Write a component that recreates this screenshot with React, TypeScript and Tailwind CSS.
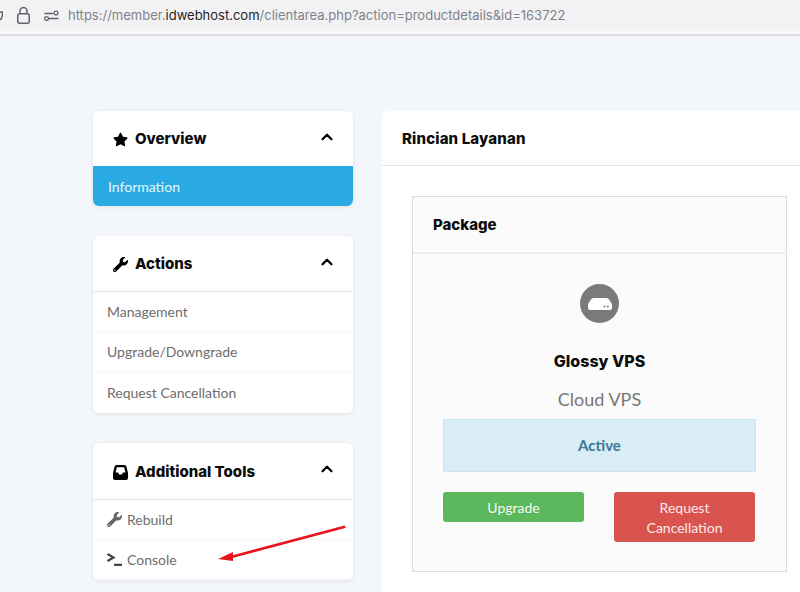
import { ChevronUp } from 'lucide-react';
import { FaStar, FaWrench } from 'react-icons/fa';
import type { ReactNode } from 'react';

const headingFont = "font-['Inter','Liberation_Sans',sans-serif]";

function SidePanel({ icon, title, tall, children }: { icon: ReactNode; title: string; tall?: boolean; children: ReactNode }) {
  return (
    <div className="bg-white rounded-md shadow-[0_1px_4px_rgba(0,0,0,0.08)] overflow-hidden">
      <div className={`${tall ? 'h-[56px]' : 'h-[55px]'} pl-[19px] pr-[17px] flex items-center justify-between`}>
        <div className="flex items-center gap-[7px] pt-[2px]">
          <span className="w-[16px] flex justify-center text-black">{icon}</span>
          <span className={`${headingFont} text-[15px] font-extrabold text-[#0c0c0c] whitespace-nowrap`}>{title}</span>
        </div>
        <ChevronUp size={18} strokeWidth={3} className="text-black -translate-y-[2px]" />
      </div>
      {children}
    </div>
  );
}

function SideItem({ label, icon, tall }: { label: string; icon?: ReactNode; tall?: boolean }) {
  return (
    <div
      className={`${
        tall ? 'h-[41px]' : 'h-[40px] border-b border-[#f5f5f5]'
      } pl-[14px] flex items-center gap-[5px] text-[14px] text-[#6d6d6d]`}
    >
      {icon}
      <span>{label}</span>
    </div>
  );
}

export default function App() {
  return (
    <div className="w-[800px] h-[592px] overflow-hidden bg-[#f3f6fa] relative font-['Lato','Liberation_Sans',sans-serif]">
      {/* Browser bar */}
      <div className="h-[36px] bg-[#f8f8f9] border-b-2 border-[#dddddd]">
        <div className="h-[31px] bg-[#f2f2f4] flex items-center">
          <svg width="3" height="10" viewBox="0 0 3 10" fill="none" stroke="#5f6368" strokeWidth="1.4" className="mr-[14px]">
            <path d="M0 1H2.4V4Q2.2 7 0 9" />
          </svg>
          <svg width="13" height="17" viewBox="0 0 13 17" fill="none" stroke="#5f6368" strokeWidth="1.5" className="mr-[14px]">
            <rect x="0.75" y="6.75" width="11.5" height="9.5" rx="2" />
            <path d="M3 6.75V4a3.5 3.5 0 0 1 7 0V6.75" />
          </svg>
          <svg width="15" height="12" viewBox="0 0 15 12" fill="none" stroke="#5f6368" strokeWidth="1.3" className="mr-[9px]">
            <path d="M0.5 3.5H9M4.5 8.5H14.5" />
            <circle cx="12" cy="3" r="1.9" />
            <circle cx="2.5" cy="8.5" r="1.9" />
          </svg>
          <span className="font-['Inter','Liberation_Sans',sans-serif] text-[13px] text-[#808388] whitespace-nowrap">
            https://member.<span className="text-[#1f1f1f]">idwebhost.com</span>/clientarea.php?action=productdetails&amp;id=163722
          </span>
        </div>
      </div>

      {/* Page content */}
      <div className="flex gap-[29px] pl-[93px] pt-[75px]">
        <div className="w-[260px] shrink-0 flex flex-col gap-[30px]">
          <SidePanel icon={<FaStar size={15} />} title="Overview">
            <div className="h-[40px] bg-[#2babe3] pl-[15px] flex items-center text-[14px] text-[#e6f6fd]">Information</div>
          </SidePanel>

          <SidePanel icon={<FaWrench size={15} />} title="Actions">
            <div className="border-t border-[#dfe1e5]">
              <SideItem label="Management" />
              <SideItem label="Upgrade/Downgrade" />
              <SideItem label="Request Cancellation" tall />
            </div>
          </SidePanel>

          <SidePanel
            tall
            title="Additional Tools"
            icon={
              <svg width="15" height="15" viewBox="0 0 15 15">
                <path
                  fill="#000"
                  fillRule="evenodd"
                  d="M3.5 0H11.5Q13 0 13.4 1.5L15 8V13Q15 15 13 15H2Q0 15 0 13V8L1.6 1.5Q2 0 3.5 0ZM3.8 2.2L2.6 7.6H5.2L6 9.4H9L9.8 7.6H12.4L11.2 2.2Z"
                />
              </svg>
            }
          >
            <div className="border-t border-[#dfe1e5]">
              <SideItem label="Rebuild" icon={<FaWrench size={15} className="text-[#666666]" />} />
              <SideItem
                label="Console"
                icon={
                  <svg width="15" height="13" viewBox="0 0 15 13" fill="none" stroke="#444444" strokeWidth="2.2">
                    <path d="M0.5 1L6.5 4.5L0.5 8" />
                    <path d="M7 11.8H15" />
                  </svg>
                }
              />
            </div>
          </SidePanel>
        </div>

        {/* Main card */}
        <div className="w-[435px] shrink-0 h-[600px] bg-white rounded-t-md">
          <div className="h-[55px] pl-[20px] pt-[2px] flex items-center border-b border-[#e3e3e3]">
            <span className={`${headingFont} text-[15px] tracking-[0.15px] font-extrabold text-[#0c0c0c]`}>Rincian Layanan</span>
          </div>
          <div className="pt-[30px] pl-[30px] pr-[30px]">
            <div className="w-[375px] h-[376px] border border-[#dddddd] bg-[#fbfbfb]">
              <div className="h-[57px] pl-[20px] pt-[2px] flex items-center border-b-2 border-[#eeeeee]">
                <span className={`${headingFont} text-[15px] font-extrabold text-[#0c0c0c]`}>Package</span>
              </div>
              <div className="px-[30px] pt-[30px] flex flex-col items-center">
                <div className="w-[39px] h-[39px] rounded-full bg-[#7a7a7a] flex items-center justify-center">
                  <svg width="24" height="12" viewBox="0 0 24 12">
                    <path
                      fill="#fff"
                      d="M5.5 0H18.5Q20 0 21 1.6L23.6 5.6Q24 6.2 24 7V10Q24 12 22 12H2Q0 12 0 10V7Q0 6.2 0.4 5.6L3 1.6Q4 0 5.5 0Z"
                    />
                    <circle cx="16.5" cy="8.6" r="1" fill="#7a7a7a" />
                    <circle cx="19.8" cy="8.6" r="1" fill="#7a7a7a" />
                  </svg>
                </div>
                <div className={`${headingFont} mt-[26px] text-[16px] font-extrabold text-[#0c0c0c]`}>Glossy VPS</div>
                <div className="mt-[14px] text-[18px] leading-[24px] text-[#777777]">Cloud VPS</div>
                <div className="mt-[8px] w-full h-[53px] bg-[#d9edf7] border border-[#cbe7f4] flex items-center justify-center text-[15px] font-bold text-[#3f7696]">
                  Active
                </div>
                <div className="mt-[20px] w-full flex justify-between items-start pr-[1px]">
                  <div className="w-[141px] h-[30px] rounded-[3px] bg-[#5cb85c] flex items-center justify-center text-[14px] text-[#f2faf2]">
                    Upgrade
                  </div>
                  <div className="w-[141px] h-[50px] pt-[1px] rounded-[3px] bg-[#d9534f] flex items-center justify-center text-center text-[14px] leading-[20px] text-[#fbeaea]">
                    Request
                    <br />
                    Cancellation
                  </div>
                </div>
              </div>
            </div>
          </div>
        </div>
      </div>

      {/* Red annotation arrow */}
      <svg className="absolute left-[215px] top-[522px]" width="132" height="42" viewBox="0 0 132 42">
        <path d="M129 5L18 34.5" stroke="#e8141c" strokeWidth="2.8" strokeLinecap="round" />
        <path d="M3 37L18 30L18 39Z" fill="#e8141c" />
      </svg>
    </div>
  );
}
